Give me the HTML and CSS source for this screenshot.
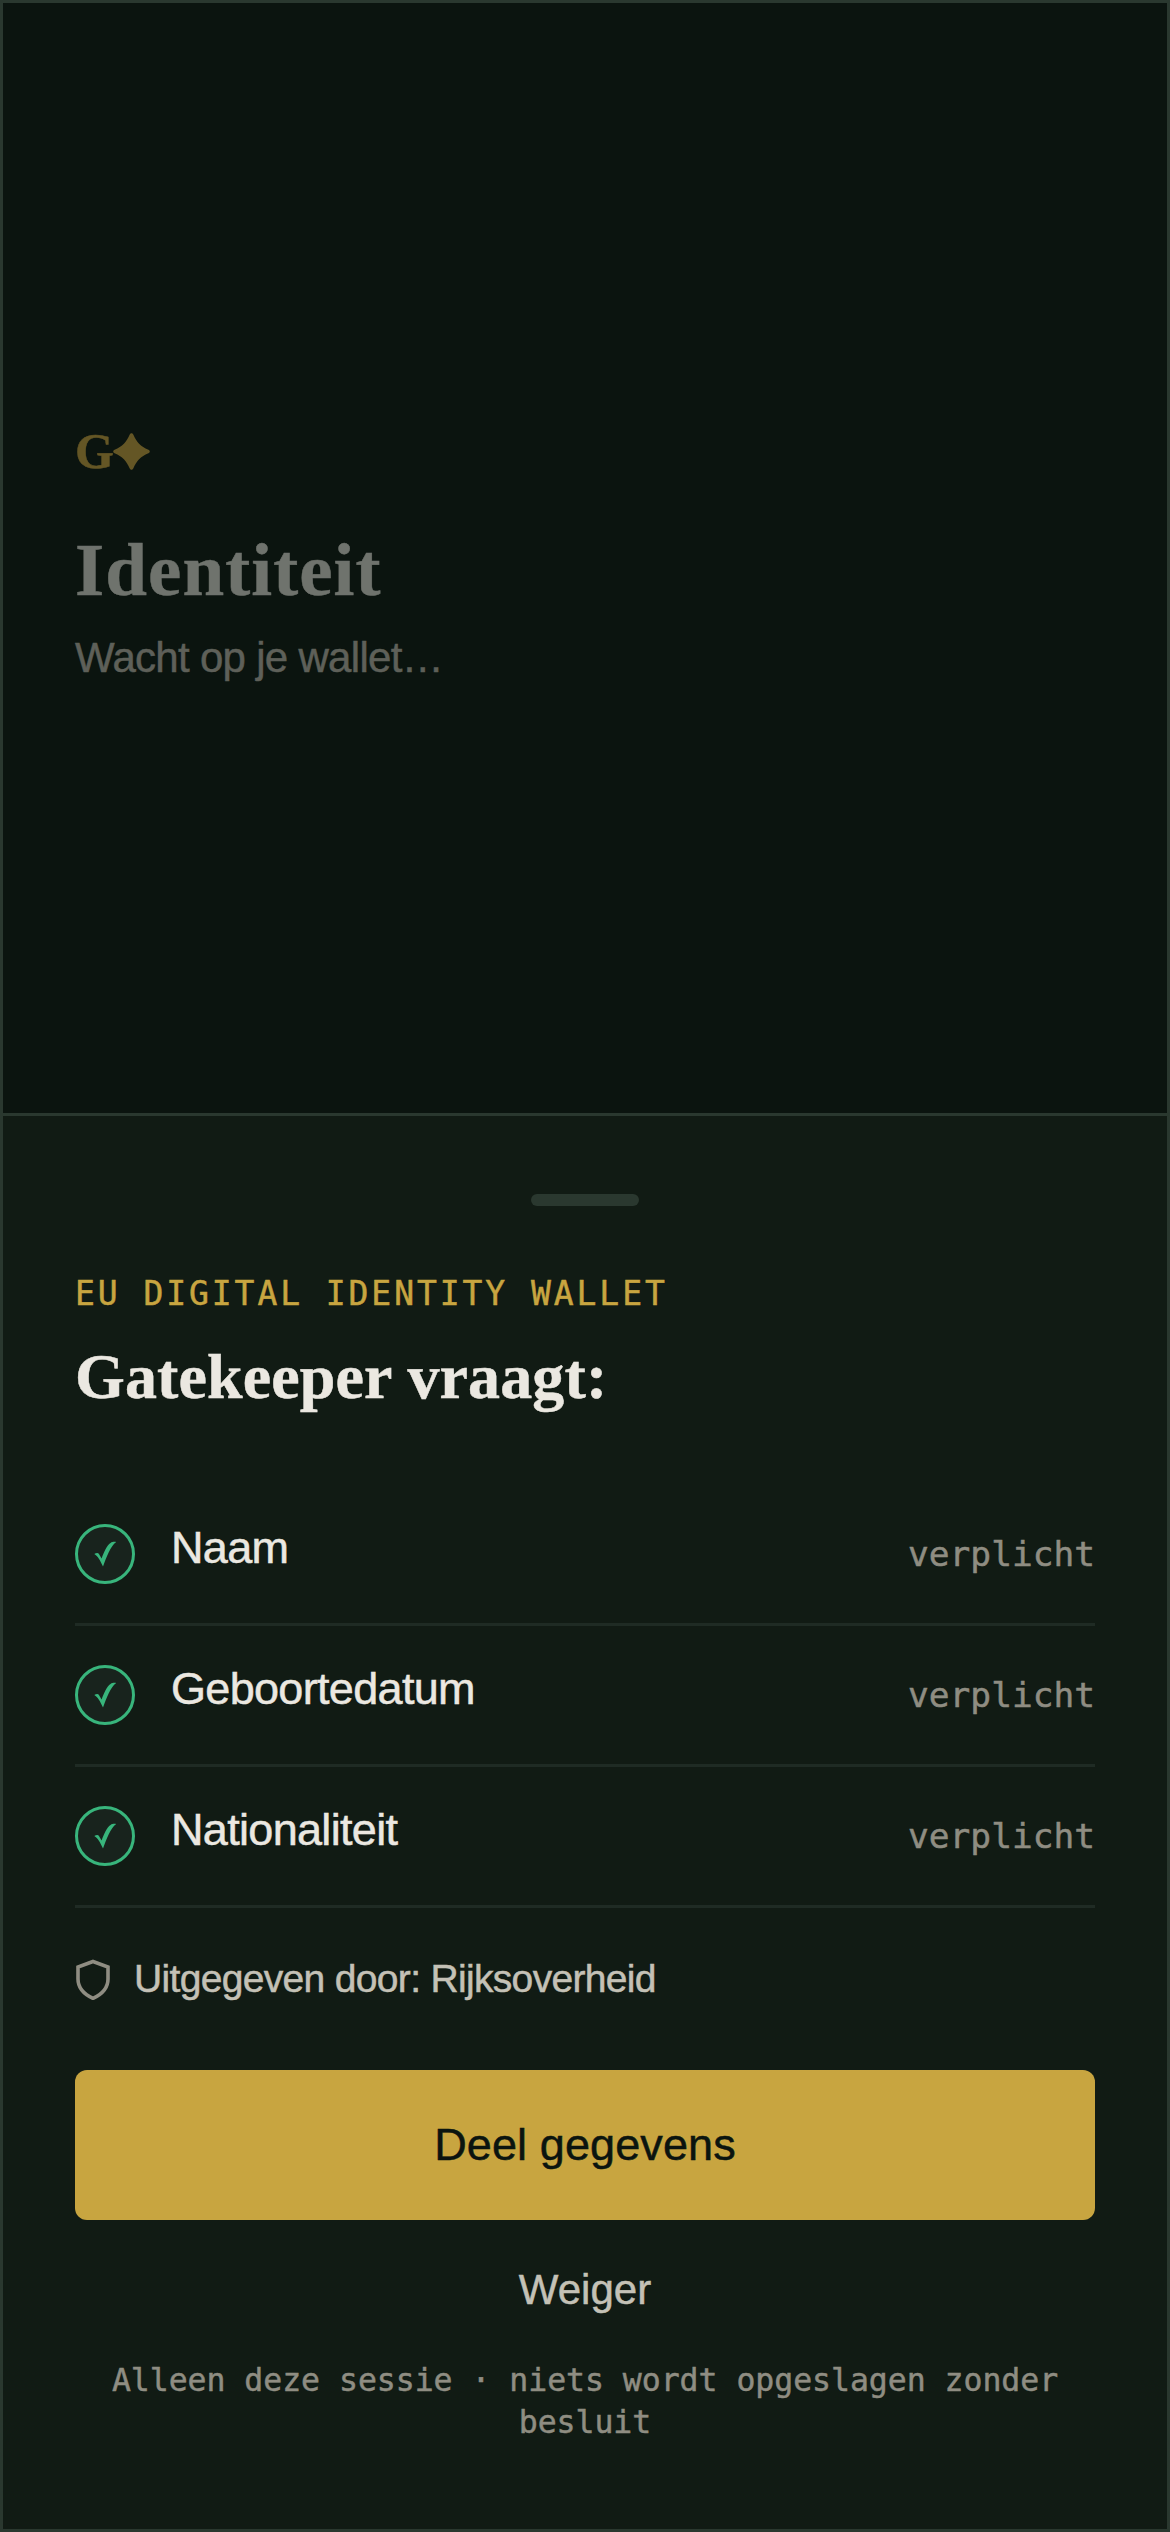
FILE: index.html
```html
<!DOCTYPE html>
<html lang="nl">
<head>
<meta charset="utf-8">
<title>Identiteit</title>
<link rel="stylesheet" href="styles.css">
</head>
<body>
<div class="screen">
  <header class="page">
    <div class="logo">G<svg class="star" viewBox="0 0 37 37"><path d="M18.5 0.2c.9 0 1.500.6 1.900 1.500 2.900 7 7.200 11.700 15 15 .8.300 1.400.900 1.400 1.800s-.6 1.500-1.400 1.800c-7.800 3.300-12.100 8-15 15-.4.900-1 1.500-1.900 1.500s-1.500-.6-1.900-1.500c-2.900-7-7.200-11.700-15-15-.8-.3-1.400-.9-1.400-1.800s.6-1.500 1.400-1.800c7.800-3.300 12.100-8 15-15 .4-.9 1-1.500 1.900-1.500z"/></svg></div>
    <h1 class="title">Identiteit</h1>
    <p class="status">Wacht op je wallet…</p>
  </header>
  <main class="sheet">
    <div class="handle"></div>
    <p class="eyebrow">EU DIGITAL IDENTITY WALLET</p>
    <h2 class="heading">Gatekeeper vraagt:</h2>
    <ul class="claims">
      <li class="claim"><span class="check"><svg viewBox="0 0 54 54"><path d="M16.300 27C18 26 20 25.600 20.800 26.800L23.600 31.500C26 25 28.800 18.500 32.500 16C34.300 14.700 36.500 14.700 38.200 15C32.500 19 28.500 30 25 39.600C22 33 20 29.500 16.300 27z"/></svg></span><span class="name">Naam</span><span class="need">verplicht</span></li>
      <li class="claim"><span class="check"><svg viewBox="0 0 54 54"><path d="M16.300 27C18 26 20 25.600 20.800 26.800L23.600 31.500C26 25 28.800 18.500 32.500 16C34.300 14.700 36.500 14.700 38.200 15C32.500 19 28.500 30 25 39.600C22 33 20 29.500 16.300 27z"/></svg></span><span class="name">Geboortedatum</span><span class="need">verplicht</span></li>
      <li class="claim"><span class="check"><svg viewBox="0 0 54 54"><path d="M16.300 27C18 26 20 25.600 20.800 26.800L23.600 31.500C26 25 28.800 18.500 32.500 16C34.300 14.700 36.500 14.700 38.200 15C32.500 19 28.500 30 25 39.600C22 33 20 29.500 16.300 27z"/></svg></span><span class="name">Nationaliteit</span><span class="need">verplicht</span></li>
    </ul>
    <div class="issuer"><svg class="shield" viewBox="0 0 36 42"><path d="M18 3.500L33 9V21c0 9-5.500 15-15 19.400C8.500 36 3 30 3 21V9z"/></svg><span>Uitgegeven door: Rijksoverheid</span></div>
    <button class="share">Deel gegevens</button>
    <button class="refuse">Weiger</button>
    <p class="note">Alleen deze sessie · niets wordt opgeslagen zonder besluit</p>
  </main>
</div>
</body>
</html>
```
FILE: styles.css
```css
* { box-sizing: border-box; margin: 0; padding: 0; }
body { background: #0b140f; font-family: "Liberation Sans", Arial, sans-serif; -webkit-text-stroke: 0.5px currentColor; }
.screen {
  width: 1170px; height: 2532px;
  display: flex; flex-direction: column;
  border: 3px solid #2a382f;
}
.page { height: 1110px; padding: 418px 72px 0; }
.logo {
  display: flex; align-items: center; height: 60px;
  font: bold 50px/60px "Liberation Serif", serif; color: #645625;
}
.star { width: 37px; height: 37px; margin-left: -1px; fill: #645625; }
.title {
  margin-top: 44px;
  font: bold 75px/90px "Liberation Serif", serif; letter-spacing: 1.08px; color: #6f736d;
}
.status { margin-top: 13px; font-size: 42px; line-height: 60px; letter-spacing: -0.7px; color: #5e6059; }
.sheet {
  flex: 1; display: flex; flex-direction: column;
  padding: 78px 72px 0;
  border-top: 3px solid #2a382f; background: #111b14;
}
.handle { align-self: center; width: 108px; height: 12px; border-radius: 6px; background: #2a382f; }
.eyebrow {
  margin-top: 63px;
  font: 33px/50px "DejaVu Sans Mono", monospace; letter-spacing: 2.93px; color: #c8a540;
}
.heading {
  margin-top: 18px;
  font: bold 64px/80px "Liberation Serif", serif; letter-spacing: 0.12px; color: #ebe8e1;
}
.claims { margin-top: 68px; list-style: none; }
.claim { display: flex; align-items: center; height: 141px; border-bottom: 3px solid #1f2b24; }
.check { width: 60px; height: 60px; border: 3px solid #38b57c; border-radius: 50%; background: #18231d; }
.check svg { display: block; width: 54px; height: 54px; fill: #38b57c; }
.name {
  flex: 1; margin-left: 36px; padding-bottom: 12px;
  font-size: 45px; line-height: 60px; letter-spacing: -0.68px; color: #ebe8e1;
}
.need { font: 34.5px/50px "DejaVu Sans Mono", monospace; color: #8f8d82; }
.issuer {
  display: flex; align-items: center; gap: 23px; margin-top: 45px;
  font-size: 39px; line-height: 51px; letter-spacing: -0.67px; color: #c4c1b6;
}
.shield { width: 36px; height: 42px; fill: none; stroke: #8f8d82; stroke-width: 3.6px; }
button { border: 0; font-family: inherit; text-align: center; -webkit-text-stroke: inherit; }
.share {
  height: 150px; margin-top: 66px; padding-bottom: 1px; border-radius: 12px;
  background: #c8a540; color: #0b140f; font-size: 45px; letter-spacing: 0.1px;
  -webkit-text-stroke: 0.5px #0b140f;
}
.refuse { margin-top: 40px; background: none; color: #c4c1b6; font-size: 42px; line-height: 60px; -webkit-text-stroke: 0.5px #c4c1b6; }
.note {
  margin-top: 39px; text-align: center;
  font: 31.5px/42px "DejaVu Sans Mono", monospace; letter-spacing: -0.04px; color: #8f8d82;
}
```
